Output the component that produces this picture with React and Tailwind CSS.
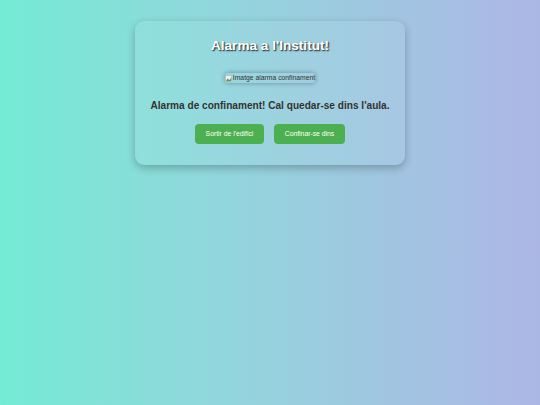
export default function App() {
  return (
    <div className="min-h-[405px] w-full bg-gradient-to-r from-[#74ebd5] to-[#acb6e5] pt-[21px] font-['Liberation_Sans',Arial,sans-serif]">
      <div className="mx-auto flex w-[270px] flex-col items-center rounded-[9px] bg-white/[0.06] pb-[21px] pt-[16px] shadow-[0_3px_8px_rgba(0,0,0,0.25)]">
        <h1 className="text-[13.6px] font-bold leading-[18px] text-white [text-shadow:1px_1px_1.5px_rgba(0,0,0,0.9)]">
          Alarma a l'Institut!
        </h1>
        <div className="mt-[18px] flex h-[10px] items-center rounded-[3px] shadow-[0_0_5px_rgba(0,0,0,0.35)]">
          <svg width="7" height="7" viewBox="0 0 8 8" className="mr-[1px]">
            <rect x="0.5" y="0.5" width="7" height="7" fill="#eee" stroke="#aaa" strokeWidth="0.6" />
            <path d="M1 7 L3 4 L5 6 L7 3 L7 7 Z" fill="#5a9a4a" />
          </svg>
          <span className="text-[6.8px] leading-[10px] text-[#333]">Imatge alarma confinament</span>
        </div>
        <p className="mt-[16px] text-[10.1px] font-bold leading-[14px] text-[#333]">
          Alarma de confinament! Cal quedar-se dins l'aula.
        </p>
        <div className="mt-[11px] flex gap-[10px]">
          <button className="h-[20px] w-[69px] rounded-[4px] bg-[#4caf50] text-[6.8px] text-white">
            Sortir de l'edifici
          </button>
          <button className="h-[20px] w-[71px] rounded-[4px] bg-[#4caf50] text-[6.8px] text-white">
            Confinar-se dins
          </button>
        </div>
      </div>
    </div>
  );
}
